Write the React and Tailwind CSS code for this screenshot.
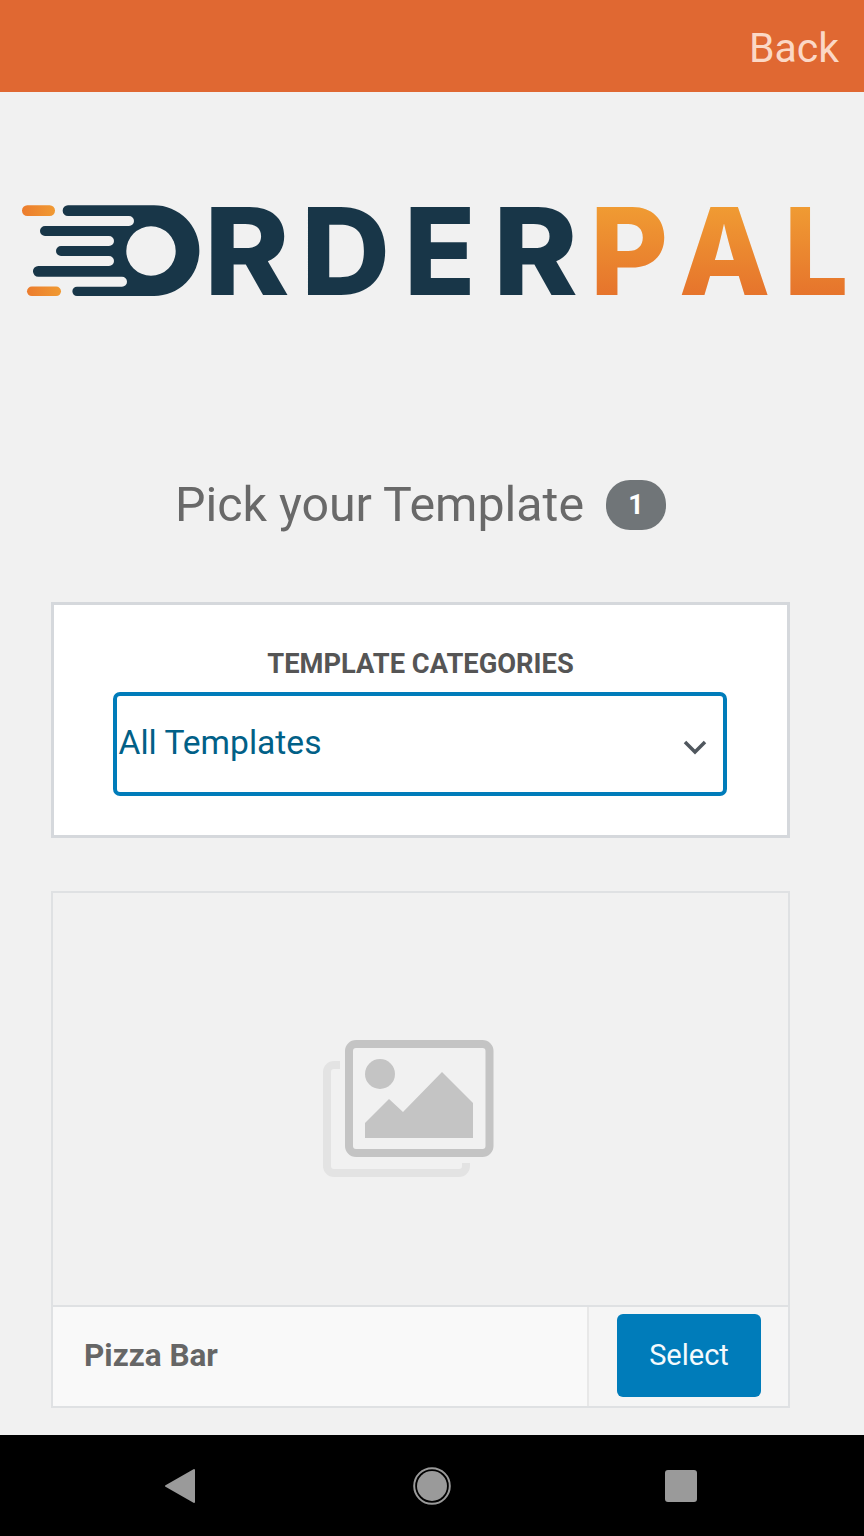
const logoLetters = [
  { ch: "R", x: 204, sx: 1.07, fill: "#183648" },
  { ch: "D", x: 301, sx: 1.02, fill: "#183648" },
  { ch: "E", x: 404, sx: 0.97, fill: "#183648" },
  { ch: "R", x: 493, sx: 1.06, fill: "#183648" },
  { ch: "P", x: 590, sx: 0.99, fill: "url(#palFill)" },
  { ch: "A", x: 679, sx: 0.98, fill: "url(#palFill)" },
  { ch: "L", x: 784, sx: 0.94, fill: "url(#palFill)" },
]

function Logo() {
  return (
    <svg className="block" width="864" height="150" viewBox="0 170 864 150">
      <defs>
        <linearGradient id="palFill" gradientUnits="userSpaceOnUse" x1="0" y1="-90" x2="0" y2="0">
          <stop offset="0" stopColor="#f09c33" />
          <stop offset="1" stopColor="#e6742c" />
        </linearGradient>
        <linearGradient id="barFill" x1="0" y1="0" x2="1" y2="0">
          <stop offset="0" stopColor="#ec7c2d" />
          <stop offset="1" stopColor="#f09a33" />
        </linearGradient>
      </defs>
      <rect x="22" y="205.3" width="33" height="10.7" rx="5.3" fill="url(#barFill)" />
      <rect x="27" y="286.5" width="34" height="9.6" rx="4.8" fill="url(#barFill)" />
      <path
        fillRule="evenodd"
        fill="#183648"
        d="M68 205.3H154A45.35 45.35 0 0 1 154 296H77A4.65 4.65 0 0 1 77 286.7H122A5 5 0 0 0 122 276.7H38.3A5.35 5.35 0 0 1 38.3 266H109A5 5 0 0 0 109 256H61A5 5 0 0 1 61 246H109A5 5 0 0 0 109 236H45A5 5 0 0 1 45 226H129A5 5 0 0 0 129 216H68A5.35 5.35 0 0 1 68 205.3ZM151 226.3A24.7 24.7 0 1 0 151 275.7A24.7 24.7 0 1 0 151 226.3Z"
      />
      {logoLetters.map((l, i) => (
        <text
          key={i}
          transform={`translate(${l.x} 295) scale(${l.sx} 1)`}
          fill={l.fill}
          fontSize="121"
          fontWeight="800"
          fontFamily="Inter, sans-serif"
        >
          {l.ch}
        </text>
      ))}
    </svg>
  )
}

function GalleryIcon() {
  return (
    <svg width="176" height="142" viewBox="320 1038 176 142" fill="none">
      <path
        d="M340 1065H334A7 7 0 0 0 327 1072V1166A7 7 0 0 0 334 1173H459A7 7 0 0 0 466 1166V1163"
        stroke="#e3e3e3"
        strokeWidth="8"
      />
      <rect x="349" y="1044" width="140.500" height="109" rx="7" stroke="#c4c4c4" strokeWidth="8" />
      <circle cx="380" cy="1074" r="15" fill="#c4c4c4" />
      <path d="M365 1138V1123L389 1099L403 1112L442 1072L473 1103V1138Z" fill="#c4c4c4" />
    </svg>
  )
}

export default function App() {
  return (
    <div className="flex flex-col h-[1536px] w-[864px] overflow-hidden bg-[#f1f1f1] font-[Roboto,sans-serif]">
      <header className="flex items-center justify-end h-[92px] shrink-0 bg-[#e06832] pr-[25px]">
        <span className="text-[41px] leading-none text-[#fbd8c6] mt-[4px]">Back</span>
      </header>

      <div className="mt-[78px]">
        <Logo />
      </div>

      <div className="flex items-center justify-center gap-[22px] mt-[160px] h-[50px] mr-[23px]">
        <h1 className="text-[48.3px] leading-none text-[#696969]">Pick your Template</h1>
        <span className="flex items-center justify-center w-[60px] h-[50px] rounded-[24px] bg-[#707578] text-[27px] font-bold text-white">
          1
        </span>
      </div>

      <section className="flex flex-col items-center w-[739px] h-[236px] ml-[51px] mt-[72px] pt-[44px] bg-white border-[3px] border-[#d5d8dc]">
        <div className="text-[27.3px] leading-[30px] font-bold text-[#555555]">TEMPLATE CATEGORIES</div>
        <div className="flex items-center justify-between w-[614px] h-[104px] mt-[13px] mr-[2px] pl-[2px] pr-[15px] border-[4px] border-[#007cba] rounded-[7px]">
          <span className="text-[33.6px] leading-none text-[#016087] -mt-[2px]">All Templates</span>
          <svg width="26" height="16" viewBox="0 0 26 16" fill="none" className="mt-[5px]">
            <path d="M3 3L13 13L23 3" stroke="#50575e" strokeWidth="3.500" />
          </svg>
        </div>
      </section>

      <section className="flex flex-col w-[739px] h-[517px] ml-[51px] mt-[53px] border-[2.500px] border-[#dfe1e3]">
        <div className="flex-1 pl-[267px] pt-[145px]">
          <GalleryIcon />
        </div>
        <div className="flex h-[101px] shrink-0 border-t-[2.500px] border-[#dfe1e3]">
          <div className="flex items-center flex-1 pl-[31px] bg-[#f9f9f9]">
            <span className="text-[31.5px] font-bold text-[#666666] -mt-[2px]">Pizza Bar</span>
          </div>
          <div className="flex items-center justify-start w-[201px] pl-[28px] border-l-2 border-[#e8e8e8] bg-[#f5f5f5]">
            <button className="w-[144px] h-[83px] -mt-[2px] rounded-[6px] bg-[#007cba] text-[29px] text-[#f4fafd]">Select</button>
          </div>
        </div>
      </section>

      <nav className="flex items-center h-[101px] mt-[27px] pl-[164px] shrink-0 bg-black">
        <svg width="32" height="36" viewBox="0 0 32 36">
          <path d="M30 2V34L2 18Z" fill="#9a9a9a" stroke="#9a9a9a" strokeWidth="2" strokeLinejoin="round" />
        </svg>
        <svg width="40" height="40" viewBox="0 0 40 40" className="ml-[216px]">
          <circle cx="20" cy="20" r="17.8" fill="none" stroke="#9a9a9a" strokeWidth="2" />
          <circle cx="20" cy="20" r="15" fill="#9a9a9a" />
        </svg>
        <div className="w-[32px] h-[32px] ml-[213px] rounded-[3px] bg-[#9a9a9a]" />
      </nav>
    </div>
  )
}
